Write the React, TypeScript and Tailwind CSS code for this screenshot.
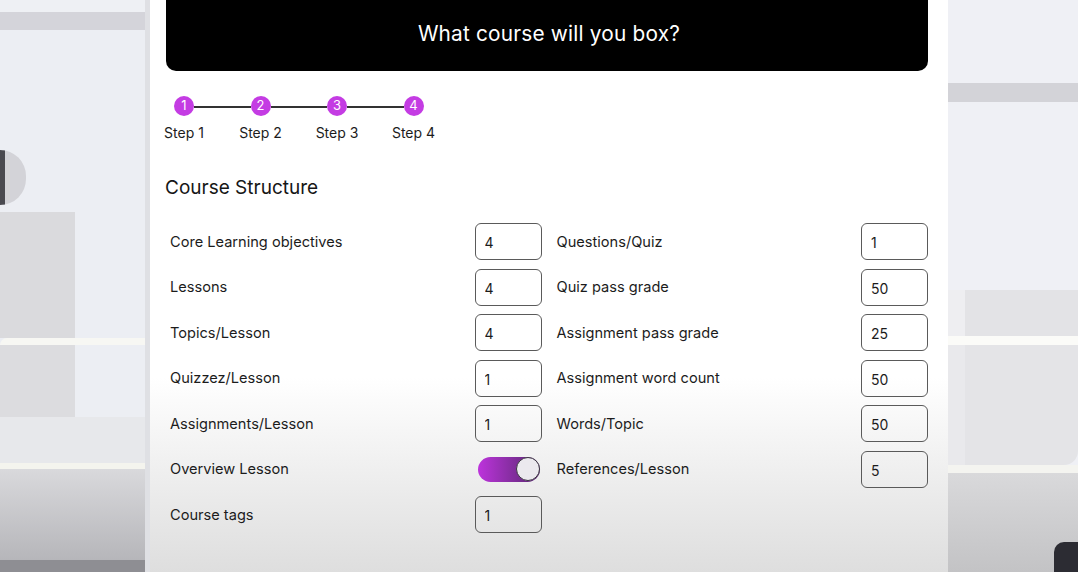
import { useState } from "react"

const leftFields = [
  { label: "Core Learning objectives", value: "4" },
  { label: "Lessons", value: "4" },
  { label: "Topics/Lesson", value: "4" },
  { label: "Quizzez/Lesson", value: "1" },
  { label: "Assignments/Lesson", value: "1" },
  { label: "Overview Lesson", toggle: true },
  { label: "Course tags", value: "1" },
]

const rightFields = [
  { label: "Questions/Quiz", value: "1" },
  { label: "Quiz pass grade", value: "50" },
  { label: "Assignment pass grade", value: "25" },
  { label: "Assignment word count", value: "50" },
  { label: "Words/Topic", value: "50" },
  { label: "References/Lesson", value: "5" },
]

const steps = [1, 2, 3, 4]

interface Field {
  label: string
  value?: string
  toggle?: boolean
}

const FieldRow = ({ field }: { field: Field }) => {
  const [on, setOn] = useState(true)
  return (
    <div className="flex items-center h-[37px]">
      <span className="flex-1 text-[14.6px] text-[#1c1c1c] pt-[2px]">{field.label}</span>
      {field.toggle ? (
        <div className="w-[67px] flex items-center pl-[3px]">
          <button
            onClick={() => setOn(!on)}
            className="w-[62px] h-[25px] rounded-full bg-linear-to-r from-[#bd33dc] to-[#5a2672] flex items-center justify-end"
          >
            <span className="w-[24px] h-[24px] rounded-full bg-[#ebe9ee] border-[1.5px] border-[#3a3540]" />
          </button>
        </div>
      ) : (
        <input
          defaultValue={field.value}
          className="w-[67px] h-[37px] rounded-[6px] border-[1.5px] border-[#5a5a5a] bg-transparent pl-[9px] pt-[2px] text-[14px] text-[#1c1c1c] outline-none"
        />
      )}
    </div>
  )
}

const LeftDeco = () => (
  <div className="w-[150px] h-full flex flex-col bg-[#eceef3] border-r-[5px] border-[#dfe0e4]">
    <div className="h-[12px] bg-[#eef0f4]" />
    <div className="h-[18px] bg-[#d4d4da]" />
    <div className="h-[120px]" />
    <div className="h-[55px] w-[26px] rounded-r-full bg-[#d3d3d8] border-l-[5px] border-[#4a4a50]" />
    <div className="h-[7px]" />
    <div className="h-[126px] w-[75px] bg-[#dadadd]" />
    <div className="h-[7px] bg-[#f7f7f3] rounded-tl-[10px]" />
    <div className="h-[72px] flex">
      <div className="w-[75px] bg-[#dcdcdf]" />
      <div className="flex-1" />
    </div>
    <div className="h-[46px] bg-[#e7e8eb]" />
    <div className="h-[6px] bg-[#f4f4ee]" />
    <div className="flex-1 bg-linear-to-b from-[#d9d9dc] to-[#b6b6ba]" />
    <div className="h-[12px] bg-[#8e8e93]" />
  </div>
)

const RightDeco = () => (
  <div className="flex-1 h-full flex flex-col bg-[#eff0f5]">
    <div className="h-[83px]" />
    <div className="h-[19px] bg-[#d3d3d8]" />
    <div className="h-[188px]" />
    <div className="h-[46px] flex">
      <div className="w-[17px] bg-[#eeeef1]" />
      <div className="flex-1 bg-[#e3e3e6]" />
    </div>
    <div className="h-[9px] bg-[#fbfbf8]" />
    <div className="h-[120px] flex">
      <div className="w-[17px] bg-[#e9e9ec]" />
      <div className="flex-1 bg-[#e4e4e7] rounded-br-[14px]" />
    </div>
    <div className="h-[8px] bg-[#f4f4f0]" />
    <div className="flex-1 flex bg-linear-to-b from-[#d9d9db] to-[#c3c3c5]">
      <div className="flex-1" />
      <div className="self-end w-[24px] h-[30px] rounded-tl-[10px] bg-[#2c2c33]" />
    </div>
  </div>
)

export default function App() {
  return (
    <div className="w-full h-[572px] flex overflow-hidden font-['Inter','Liberation_Sans',sans-serif]">
      <LeftDeco />
      <div className="w-[798px] h-full bg-linear-to-b from-white from-[66%] to-[#dedede] pl-[16px] pr-[20px] flex flex-col">
        <div className="h-[71px] bg-black rounded-b-[10px] flex items-center justify-center">
          <h1 className="text-white text-[20.8px] tracking-[0.2px] -mt-[3px] ml-[4px]">What course will you box?</h1>
        </div>

        <div className="mt-[25px] -ml-[3px] flex items-start">
          {steps.map((s, i) => (
            <div key={s} className="flex items-start">
              {i > 0 && <div className="w-[56.5px] h-[1.5px] bg-[#333] mt-[10px] -mx-[11px]" />}
              <div className="flex flex-col items-center w-[42px]">
                <div className="w-[20px] h-[20px] rounded-full bg-[#c43ce3] text-white text-[13px] flex items-center justify-center">
                  {s}
                </div>
                <span className="mt-[7px] text-[14px] text-[#1c1c1c] whitespace-nowrap leading-[20px]">Step {s}</span>
              </div>
            </div>
          ))}
        </div>

        <h2 className="mt-[32px] text-[19px] text-[#161616] leading-[26px] -ml-[1px]">Course Structure</h2>

        <div className="mt-[22px] pl-[4px] grid grid-cols-2 gap-x-[15px]">
          <div className="flex flex-col gap-[8.5px]">
            {leftFields.map((f) => (
              <FieldRow key={f.label} field={f} />
            ))}
          </div>
          <div className="flex flex-col gap-[8.5px]">
            {rightFields.map((f) => (
              <FieldRow key={f.label} field={f} />
            ))}
          </div>
        </div>
      </div>
      <RightDeco />
    </div>
  )
}
